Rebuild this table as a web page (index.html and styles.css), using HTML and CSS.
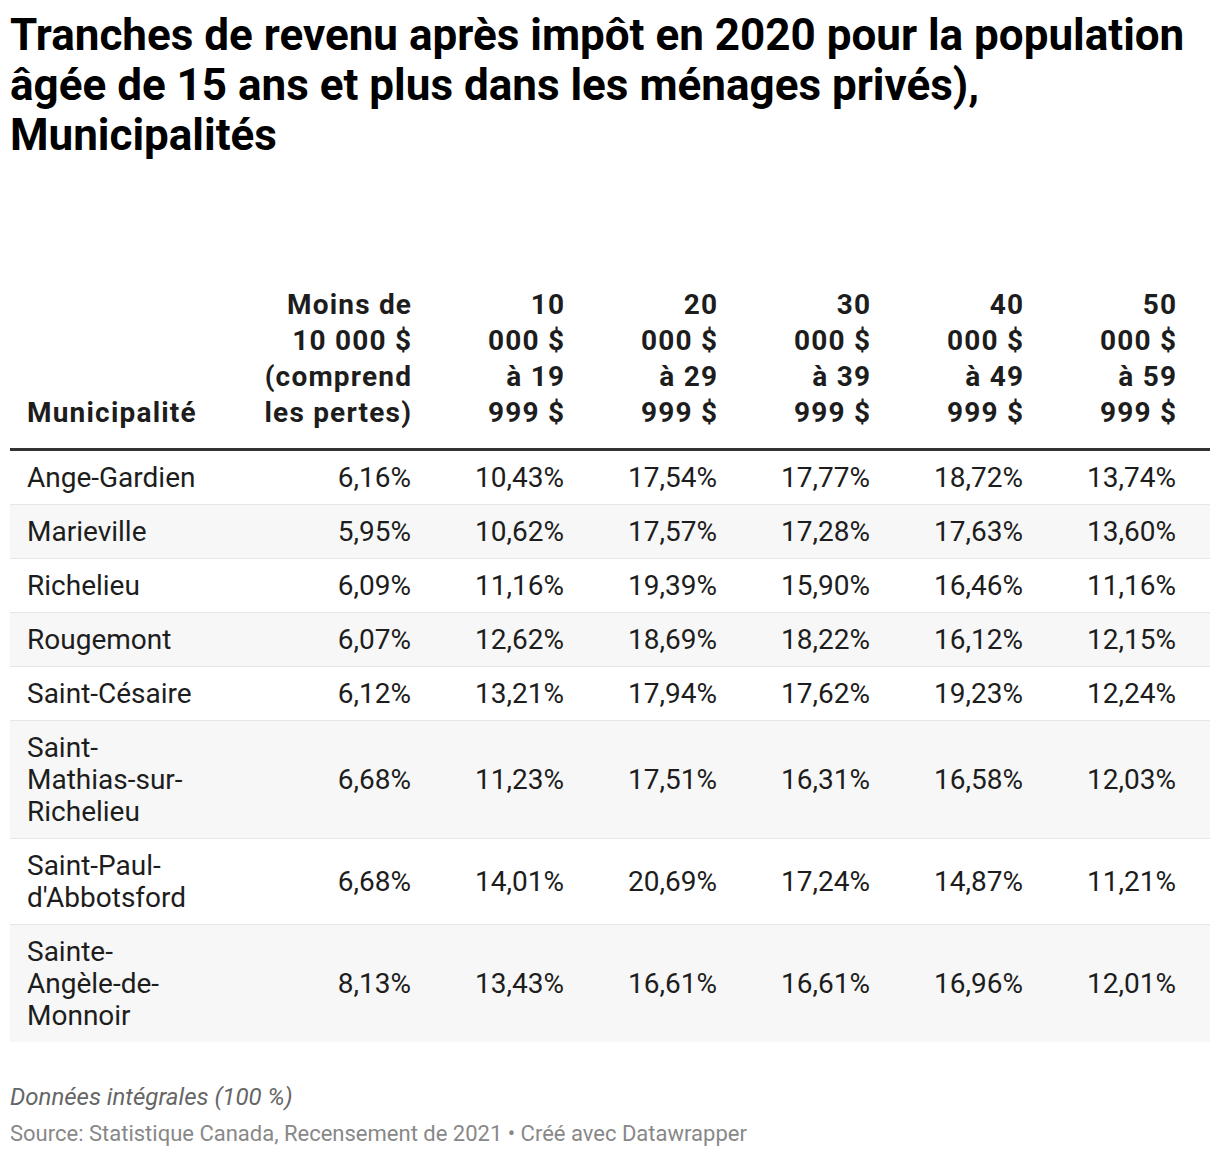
FILE: index.html
```html
<!DOCTYPE html>
<html lang="fr">
<head>
<meta charset="utf-8">
<link rel="stylesheet" href="styles.css">
</head>
<body>
<div class="chart">
  <h1 class="title">Tranches de revenu après impôt en 2020 pour la population âgée de 15 ans et plus dans les ménages privés), Municipalités</h1>
  <div class="table">
    <div class="row head">
      <div class="cell name">Municipalité</div>
      <div class="cell num">Moins de<br>10 000 $<br>(comprend<br>les pertes)</div>
      <div class="cell num">10<br>000 $<br>à 19<br>999 $</div>
      <div class="cell num">20<br>000 $<br>à 29<br>999 $</div>
      <div class="cell num">30<br>000 $<br>à 39<br>999 $</div>
      <div class="cell num">40<br>000 $<br>à 49<br>999 $</div>
      <div class="cell num">50<br>000 $<br>à 59<br>999 $</div>
    </div>
    <div class="row">
      <div class="cell name">Ange-Gardien</div>
      <div class="cell num">6,16%</div><div class="cell num">10,43%</div><div class="cell num">17,54%</div><div class="cell num">17,77%</div><div class="cell num">18,72%</div><div class="cell num">13,74%</div>
    </div>
    <div class="row alt">
      <div class="cell name">Marieville</div>
      <div class="cell num">5,95%</div><div class="cell num">10,62%</div><div class="cell num">17,57%</div><div class="cell num">17,28%</div><div class="cell num">17,63%</div><div class="cell num">13,60%</div>
    </div>
    <div class="row">
      <div class="cell name">Richelieu</div>
      <div class="cell num">6,09%</div><div class="cell num">11,16%</div><div class="cell num">19,39%</div><div class="cell num">15,90%</div><div class="cell num">16,46%</div><div class="cell num">11,16%</div>
    </div>
    <div class="row alt">
      <div class="cell name">Rougemont</div>
      <div class="cell num">6,07%</div><div class="cell num">12,62%</div><div class="cell num">18,69%</div><div class="cell num">18,22%</div><div class="cell num">16,12%</div><div class="cell num">12,15%</div>
    </div>
    <div class="row">
      <div class="cell name">Saint-Césaire</div>
      <div class="cell num">6,12%</div><div class="cell num">13,21%</div><div class="cell num">17,94%</div><div class="cell num">17,62%</div><div class="cell num">19,23%</div><div class="cell num">12,24%</div>
    </div>
    <div class="row alt">
      <div class="cell name">Saint-<br>Mathias-sur-<br>Richelieu</div>
      <div class="cell num">6,68%</div><div class="cell num">11,23%</div><div class="cell num">17,51%</div><div class="cell num">16,31%</div><div class="cell num">16,58%</div><div class="cell num">12,03%</div>
    </div>
    <div class="row">
      <div class="cell name">Saint-Paul-<br>d'Abbotsford</div>
      <div class="cell num">6,68%</div><div class="cell num">14,01%</div><div class="cell num">20,69%</div><div class="cell num">17,24%</div><div class="cell num">14,87%</div><div class="cell num">11,21%</div>
    </div>
    <div class="row alt last">
      <div class="cell name">Sainte-<br>Angèle-de-<br>Monnoir</div>
      <div class="cell num">8,13%</div><div class="cell num">13,43%</div><div class="cell num">16,61%</div><div class="cell num">16,61%</div><div class="cell num">16,96%</div><div class="cell num">12,01%</div>
    </div>
  </div>
  <div class="footer">
    <p class="notes">Données intégrales (100 %)</p>
    <p class="source">Source: Statistique Canada, Recensement de 2021 • Créé avec Datawrapper</p>
  </div>
</div>
</body>
</html>
```

FILE: styles.css
```css
html, body {
  margin: 0;
  padding: 0;
  background: #ffffff;
}
body {
  font-family: Roboto, "Liberation Sans", Arial, sans-serif;
  color: #1d1d1d;
}
.chart {
  padding: 10px 10px 0 10px;
}
.title {
  margin: 0;
  font-size: 44px;
  line-height: 50px;
  font-weight: 700;
  color: #000000;
}
.table {
  margin-top: 127px;
}
.row {
  display: grid;
  grid-template-columns: 248px repeat(5, 153px) 187px;
  font-size: 28px;
  line-height: 32px;
  border-bottom: 1px solid #e6e6e6;
  align-items: center;
}
.row.alt {
  background: #f7f7f7;
}
.row.last {
  border-bottom: none;
}
.row.head {
  font-weight: 700;
  line-height: 36px;
  letter-spacing: 1.2px;
  border-bottom: 3px solid #333333;
  align-items: end;
}
.cell {
  padding-top: 11px;
  padding-bottom: 10px;
}
.row.head .cell {
  padding-top: 0;
  padding-bottom: 17px;
}
.row.head .cell.num {
  margin-right: -1.2px;
}
.cell.name {
  padding-left: 17px;
  text-align: left;
}
.cell.num {
  text-align: right;
}
.cell.num:last-child {
  padding-right: 34px;
}
.footer {
  padding-top: 39px;
}
.notes {
  margin: 0;
  font-size: 24px;
  line-height: 32px;
  font-style: italic;
  color: #666666;
}
.source {
  margin: 7px 0 0 0;
  font-size: 22px;
  line-height: 28px;
  color: #888888;
}
```
